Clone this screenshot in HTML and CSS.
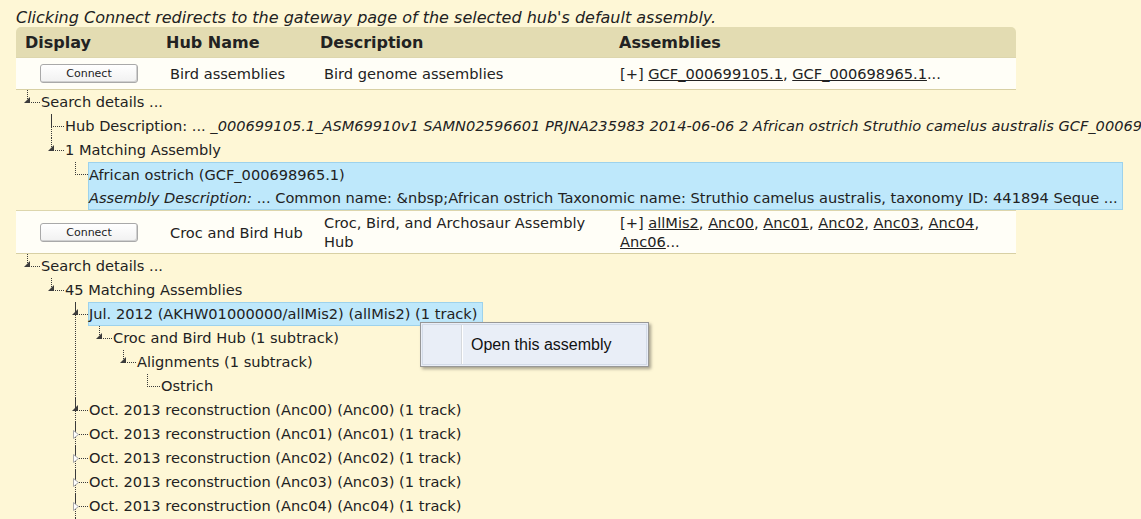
FILE: index.html
```html
<!DOCTYPE html>
<html>
<head>
<meta charset="utf-8">
<link rel="stylesheet" href="styles.css">
</head>
<body>
<div class="page">
  <p class="note">Clicking Connect redirects to the gateway page of the selected hub's default assembly.</p>
  <div class="hubs">
    <div class="hubs-head">
      <div>Display</div><div>Hub Name</div><div>Description</div><div>Assemblies</div>
    </div>
    <div class="hubs-row">
      <div class="cell cell-btn"><button class="connect">Connect</button></div>
      <div class="cell">Bird assemblies</div>
      <div class="cell">Bird genome assemblies</div>
      <div class="cell cell-asm">[+] <a href="#">GCF_000699105.1</a>, <a href="#">GCF_000698965.1</a>...</div>
    </div>
  </div>
  <ul class="tree">
    <li class="open last"><span class="tw"></span><span class="node">Search details ...</span>
      <ul>
        <li><span class="node">Hub Description: ... <i>_000699105.1_ASM69910v1 SAMN02596601 PRJNA235983 2014-06-06 2 African ostrich Struthio camelus australis GCF_000698965.1_ASM69896v1</i></span></li>
        <li class="open last"><span class="tw"></span><span class="node">1 Matching Assembly</span>
          <ul>
            <li class="last"><span class="node hl multi">African ostrich (GCF_000698965.1)<br><i>Assembly Description:</i> ... Common name: &amp;nbsp;African ostrich Taxonomic name: Struthio camelus australis, taxonomy ID: 441894 Seque ...</span></li>
          </ul>
        </li>
      </ul>
    </li>
  </ul>
  <div class="hubs">
    <div class="hubs-row">
      <div class="cell cell-btn"><button class="connect">Connect</button></div>
      <div class="cell cell-name">Croc and Bird Hub</div>
      <div class="cell">Croc, Bird, and Archosaur Assembly Hub</div>
      <div class="cell cell-asm">[+] <a href="#">allMis2</a>, <a href="#">Anc00</a>, <a href="#">Anc01</a>, <a href="#">Anc02</a>, <a href="#">Anc03</a>, <a href="#">Anc04</a>, <a href="#">Anc06</a>...</div>
    </div>
  </div>
  <ul class="tree tree2">
    <li class="open last"><span class="tw"></span><span class="node">Search details ...</span>
      <ul>
        <li class="open last"><span class="tw"></span><span class="node">45 Matching Assemblies</span>
          <ul>
            <li class="open"><span class="tw"></span><span class="node hl">Jul. 2012 (AKHW01000000/allMis2) (allMis2) (1 track)</span>
              <ul>
                <li class="open last"><span class="tw"></span><span class="node">Croc and Bird Hub (1 subtrack)</span>
                  <ul>
                    <li class="open last"><span class="tw"></span><span class="node">Alignments (1 subtrack)</span>
                      <ul>
                        <li class="last"><span class="node">Ostrich</span></li>
                      </ul>
                    </li>
                  </ul>
                </li>
              </ul>
            </li>
            <li class="open"><span class="tw"></span><span class="node">Oct. 2013 reconstruction (Anc00) (Anc00) (1 track)</span></li>
            <li class="closed"><svg class="tc" width="7" height="9" viewBox="0 0 7 9"><path d="M0.5 0.5 L5.5 4.5 L0.5 8.5 Z" fill="#fdfdfd" stroke="#a8a8a8"/></svg><span class="node">Oct. 2013 reconstruction (Anc01) (Anc01) (1 track)</span></li>
            <li class="closed"><svg class="tc" width="7" height="9" viewBox="0 0 7 9"><path d="M0.5 0.5 L5.5 4.5 L0.5 8.5 Z" fill="#fdfdfd" stroke="#a8a8a8"/></svg><span class="node">Oct. 2013 reconstruction (Anc02) (Anc02) (1 track)</span></li>
            <li class="closed"><svg class="tc" width="7" height="9" viewBox="0 0 7 9"><path d="M0.5 0.5 L5.5 4.5 L0.5 8.5 Z" fill="#fdfdfd" stroke="#a8a8a8"/></svg><span class="node">Oct. 2013 reconstruction (Anc03) (Anc03) (1 track)</span></li>
            <li class="closed"><svg class="tc" width="7" height="9" viewBox="0 0 7 9"><path d="M0.5 0.5 L5.5 4.5 L0.5 8.5 Z" fill="#fdfdfd" stroke="#a8a8a8"/></svg><span class="node">Oct. 2013 reconstruction (Anc04) (Anc04) (1 track)</span></li>
            <li class="closed last"><svg class="tc" width="7" height="9" viewBox="0 0 7 9"><path d="M0.5 0.5 L5.5 4.5 L0.5 8.5 Z" fill="#fdfdfd" stroke="#a8a8a8"/></svg><span class="node">Oct. 2013 reconstruction (Anc05) (Anc05) (1 track)</span></li>
          </ul>
        </li>
      </ul>
    </li>
  </ul>
</div>
<div class="ctx">
  <div class="ctx-item"><span class="ctx-gutter"></span><span class="ctx-label">Open this assembly</span></div>
</div>
</body>
</html>
```
FILE: styles.css
```css
html, body {
  margin: 0;
  height: 100%;
  overflow: hidden;
}
body {
  background: #fef7d6;
  font-family: "DejaVu Sans", Verdana, sans-serif;
  font-size: 14.6px;
  color: #222;
}
.page {
  padding: 8px 16px 0;
}
.note {
  margin: 0;
  font-style: italic;
  font-size: 16px;
  line-height: 19px;
}
.hubs {
  width: 1000px;
}
.hubs-head,
.hubs-row {
  display: grid;
  grid-template-columns: 141px 154px 299px 406px;
  align-items: center;
}
.hubs-head {
  background: #e3dcb2;
  border-radius: 5px 5px 0 0;
  height: 30px;
  font-weight: bold;
  font-size: 16px;
}
.hubs-head > div {
  padding-left: 9px;
}
.hubs-row {
  background: #fffef7;
  border-top: 1px solid #ddd6ad;
  border-bottom: 1px solid #d8d0a4;
}
.cell {
  padding: 2px 6px 2px 13px;
  line-height: 19px;
}
.cell-name {
  white-space: nowrap;
}
.cell-asm {
  padding-left: 10px;
}
.cell-btn {
  padding-left: 24px;
}
.connect {
  display: block;
  width: 98px;
  height: 19px;
  margin: 4px 0;
  padding: 0;
  font-family: "DejaVu Sans", Verdana, sans-serif;
  font-size: 11px;
  color: #222;
  background: linear-gradient(#ffffff, #f1f1f1);
  border: 1px solid #a9a9a9;
  border-radius: 3px;
  box-shadow: inset -1px -1px 0 #d0d0d0;
}
a {
  color: #222;
  text-decoration: underline;
}
.tree,
.tree ul {
  list-style: none;
  margin: 0;
  padding: 0;
}
.tree {
  padding-left: 11px;
}
.tree ul {
  margin-left: 11px;
}
.tree li {
  position: relative;
  padding-left: 13px;
}
.tree li::before {
  content: "";
  position: absolute;
  left: 0;
  top: 0;
  width: 12px;
  height: 12px;
  border-left: 1px dotted #3a3a3a;
  border-bottom: 1px dotted #3a3a3a;
}
.tree li:not(.last)::after {
  content: "";
  position: absolute;
  left: 0;
  top: 0;
  bottom: 0;
  border-left: 1px dotted #3a3a3a;
}
.node {
  display: inline-block;
  vertical-align: top;
  line-height: 22px;
  border: 1px solid transparent;
  padding: 0 4px 0 0;
  white-space: nowrap;
}
.node.multi {
  line-height: 23px;
}
.node.hl {
  background: #bee8fb;
  border-color: #9dd2ec;
}
.tw {
  position: absolute;
  left: -3px;
  top: 7px;
  width: 0;
  height: 0;
  border-left: 6px solid transparent;
  border-bottom: 6px solid #3c3c3c;
  z-index: 1;
}
.tc {
  position: absolute;
  left: -2px;
  top: 8px;
  z-index: 1;
}
.ctx {
  position: absolute;
  left: 420px;
  top: 322px;
  width: 225px;
  padding: 1px;
  border: 1px solid #979797;
  background: #e9eef7;
  box-shadow: 2px 2px 3px rgba(0, 0, 0, 0.35);
  font-family: "Liberation Sans", Arial, sans-serif;
  font-size: 16px;
  color: #111;
}
.ctx-item {
  display: flex;
  align-items: center;
  height: 39px;
  border: 1px solid #d3dbe8;
}
.ctx-gutter {
  align-self: stretch;
  width: 38px;
  border-right: 1px solid #d6d9dd;
  box-shadow: 1px 0 0 #ffffff;
}
.ctx-label {
  padding-left: 9px;
}
```
